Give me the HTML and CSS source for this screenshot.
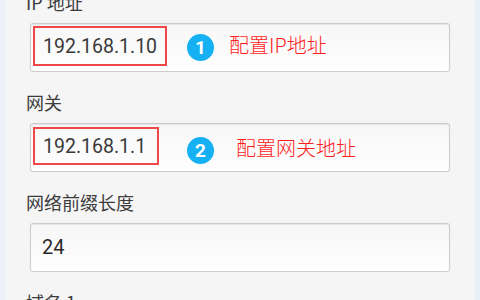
FILE: index.html
```html
<!DOCTYPE html>
<html lang="zh">
<head>
<meta charset="utf-8">
<link rel="stylesheet" href="styles.css">
</head>
<body>
<div class="edge edge-left"></div>
<main class="form">
  <div class="field">
    <div class="label">IP 地址</div>
    <div class="input">
      <span class="value boxed boxed-1">192.168.1.10</span>
      <div class="annot annot-1"><span class="badge">1</span><span class="note">配置IP地址</span></div>
    </div>
  </div>
  <div class="field">
    <div class="label">网关</div>
    <div class="input">
      <span class="value boxed boxed-2">192.168.1.1</span>
      <div class="annot annot-2"><span class="badge">2</span><span class="note">配置网关地址</span></div>
    </div>
  </div>
  <div class="field">
    <div class="label">网络前缀长度</div>
    <div class="input">
      <span class="value plain">24</span>
    </div>
  </div>
  <div class="field">
    <div class="label">域名 1</div>
  </div>
</main>
<div class="edge edge-right"></div>
</body>
</html>
```
FILE: styles.css
```css
html, body {
  margin: 0;
  padding: 0;
}
body {
  width: 480px;
  height: 300px;
  overflow: hidden;
  display: flex;
  background: #f5f5f5;
  font-family: "Noto Sans CJK SC", "Noto Sans", sans-serif;
}
.edge {
  width: 5px;
  flex: none;
}
.edge-left { background: #eef2f8; }
.edge-right { background: #e8eef6; }
.form {
  flex: 1;
  margin-top: -11px;
  padding: 0 25px 0 25px;
}
.field {
  margin-bottom: 17px;
}
.label {
  height: 26px;
  line-height: 26px;
  font-size: 18px;
  color: #3c3c3c;
  margin-left: -4px;
  margin-bottom: 8px;
}
.input {
  position: relative;
  height: 49px;
  box-sizing: border-box;
  border: 1px solid #cdcdcd;
  border-radius: 3px;
  background: linear-gradient(#f7f7f7, #fefefe);
  box-shadow: inset 0 1px 1px rgba(0,0,0,0.08), 0 0 1px rgba(0,0,0,0.12);
  display: flex;
  align-items: flex-start;
}
.value {
  font-family: Roboto, "Noto Sans", sans-serif;
  color: #3a3a3a;
}
.boxed {
  box-sizing: border-box;
  border: 2px solid #f04848;
  font-size: 19.5px;
  margin-left: 2px;
  padding-left: 8px;
  display: flex;
  align-items: center;
}
.boxed-1 {
  width: 134px;
  height: 40px;
  margin-top: 2px;
}
.boxed-2 {
  width: 126px;
  height: 38px;
  margin-top: 3px;
}
.plain {
  font-size: 20px;
  padding-left: 11px;
  line-height: 47px;
  color: #2a2a2a;
}
.annot {
  position: absolute;
  display: flex;
  align-items: center;
  left: 156px;
}
.annot-1 { top: 10px; gap: 15px; }
.annot-2 { top: 13px; gap: 22px; }
.badge {
  width: 27px;
  height: 27px;
  border-radius: 50%;
  background: #15b1f3;
  color: #fff;
  font-family: Roboto, "Noto Sans", sans-serif;
  font-weight: 700;
  font-size: 19px;
  line-height: 27px;
  text-align: center;
}
.note {
  font-size: 20px;
  line-height: 24px;
  font-weight: 300;
  color: #ff1e1e;
  margin-top: -6px;
}
```
